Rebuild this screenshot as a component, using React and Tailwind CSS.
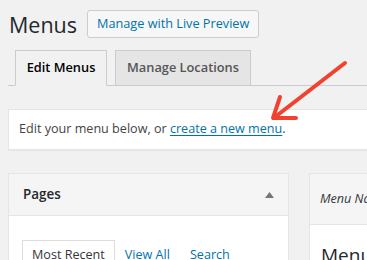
export default function App() {
  const font = { fontFamily: '"Open Sans", "Noto Sans", sans-serif' };
  return (
    <div className="relative w-[367px] h-[260px] overflow-hidden bg-[#f1f1f1] text-[#23282d]" style={font}>
      <div className="pl-[8px] pt-[10px] w-[700px]">
        <div className="flex items-center h-[28px]">
          <h1 className="text-[21.5px] leading-[28px] font-normal ml-[1px] mr-[10px] mt-[1px]">Menus</h1>
          <div className="h-[28px] px-[9px] flex items-center border border-[#ccc] bg-[#f7f7f7] rounded-[3px] text-[12.7px] text-[#0073aa]">Manage with Live Preview</div>
        </div>
        <div className="mt-[12px] flex items-end gap-[8px] pl-[7px] border-b border-[#ccc] h-[36px]">
          <div className="w-[92px] h-[36px] -mb-px flex items-center justify-center border border-[#ccc] border-b-[#f1f1f1] bg-[#f1f1f1] text-[12.8px] font-semibold text-black">Edit Menus</div>
          <div className="w-[136px] h-[35px] flex items-center justify-center border border-[#ccc] border-b-0 bg-[#e5e5e5] text-[12.8px] font-semibold text-[#555]">Manage Locations</div>
        </div>
        <div className="mt-[23px] h-[41px] bg-white border border-[#e5e5e5] shadow-[0_1px_1px_rgba(0,0,0,0.04)] flex items-center px-[10px] text-[12.6px] text-[#444]">
          <span>Edit your menu below, or <span className="text-[#0073aa] underline underline-offset-2">create a new menu</span>.</span>
        </div>
        <div className="mt-[23px] flex gap-[20px]">
          <div className="w-[281px] h-[120px] border border-[#e5e5e5] bg-white">
            <div className="h-[42px] bg-[#f5f5f5] border-b border-[#e5e5e5] flex items-center justify-between pl-[14px] pr-[14px]">
              <span className="text-[13.4px] font-semibold text-[#23282d]">Pages</span>
              <svg width="9" height="6" viewBox="0 0 9 6"><path d="M0 6 L4.5 0 L9 6 Z" fill="#72777c" /></svg>
            </div>
            <div className="pt-[24px] pl-[13px] flex items-center text-[12.6px]">
              <div className="h-[30px] px-[9px] border border-[#ddd] border-b-0 flex items-center text-[#32373c]">Most Recent</div>
              <span className="ml-[10px] text-[#0073aa]">View All</span>
              <span className="ml-[20px] text-[#0073aa]">Search</span>
            </div>
          </div>
          <div className="w-[300px] h-[120px] border border-[#e5e5e5] bg-white">
            <div className="h-[51px] bg-[#f5f5f5] border-b border-[#e5e5e5] flex items-center pl-[10px]">
              <span className="text-[12.6px] italic text-[#32373c]">Menu Name</span>
            </div>
            <div className="pt-[16px] pl-[11px] text-[19px] font-medium text-[#23282d]">Menu Structure</div>
          </div>
        </div>
      </div>
      <svg className="absolute left-0 top-0 pointer-events-none" width="367" height="260">
        <g stroke="#f3412f" strokeWidth="4" strokeLinecap="round" strokeLinejoin="round" fill="none">
          <line x1="345" y1="63" x2="275" y2="117" />
          <polyline points="280,97 273,118 296,118" />
        </g>
      </svg>
    </div>
  );
}
